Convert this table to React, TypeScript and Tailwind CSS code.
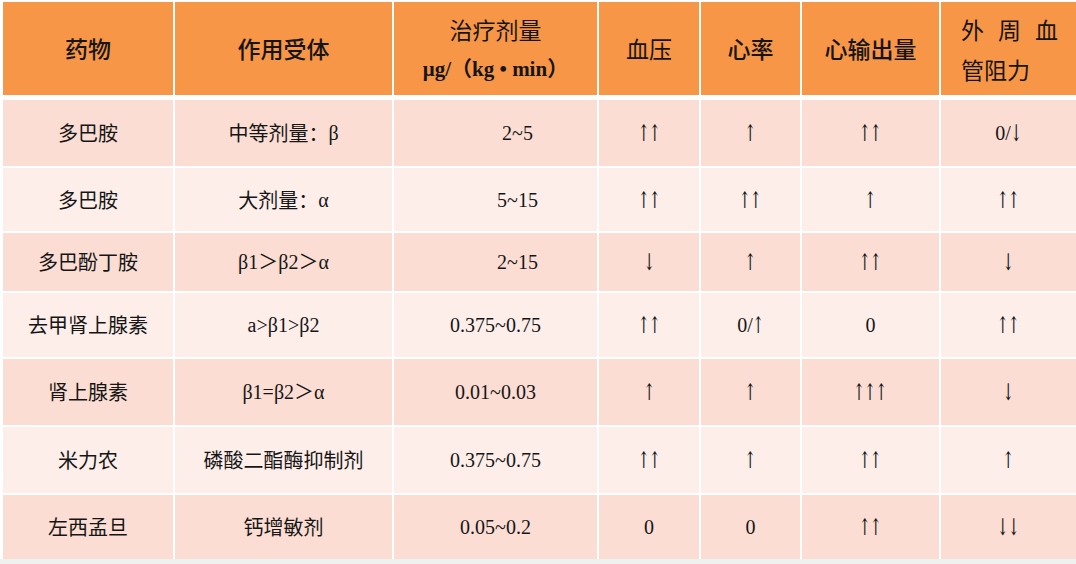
import React from "react";

const cjk = "font-['Noto_Sans_CJK_SC','Noto_Sans',sans-serif]";
const serif = "font-['Liberation_Serif','Noto_Sans_CJK_SC',serif]";

type Row = {
  drug: string;
  receptor: React.ReactNode;
  dose: string;
  shift?: boolean;
  bp: string;
  hr: string;
  co: string;
  svr: string;
};

const rows: Row[] = [
  { drug: "多巴胺", receptor: <>中等剂量：<span className={serif}>β</span></>, dose: "2~5", shift: true, bp: "↑↑", hr: "↑", co: "↑↑", svr: "0/↓" },
  { drug: "多巴胺", receptor: <>大剂量：<span className={serif}>α</span></>, dose: "5~15", shift: true, bp: "↑↑", hr: "↑↑", co: "↑", svr: "↑↑" },
  { drug: "多巴酚丁胺", receptor: <span className={serif}>β1＞β2＞α</span>, dose: "2~15", shift: true, bp: "↓", hr: "↑", co: "↑↑", svr: "↓" },
  { drug: "去甲肾上腺素", receptor: <span className={serif}>a&gt;β1&gt;β2</span>, dose: "0.375~0.75", bp: "↑↑", hr: "0/↑", co: "0", svr: "↑↑" },
  { drug: "肾上腺素", receptor: <span className={serif}>β1=β2＞α</span>, dose: "0.01~0.03", bp: "↑", hr: "↑", co: "↑↑↑", svr: "↓" },
  { drug: "米力农", receptor: "磷酸二酯酶抑制剂", dose: "0.375~0.75", bp: "↑↑", hr: "↑", co: "↑↑", svr: "↑" },
  { drug: "左西孟旦", receptor: "钙增敏剂", dose: "0.05~0.2", bp: "0", hr: "0", co: "↑↑", svr: "↓↓" },
];

const heights = ["h-[66px]", "h-[63px]", "h-[58px]", "h-[64px]", "h-[66px]", "h-[66px]", "h-[64px]"];

// arrows are set in DejaVu Serif, squeezed to the narrow look of the original
function Effect({ v }: { v: string }) {
  const parts = v.split(/([↑↓]+)/).filter(Boolean);
  return (
    <span className="flex items-center">
      {parts.map((p, i) =>
        /[↑↓]/.test(p) ? (
          <span
            key={i}
            className="font-['DejaVu_Serif',serif] text-[20px] font-extralight inline-block scale-x-[0.7] scale-y-[1.15] tracking-[-1px] ml-[-3px] mr-[-2px]"
          >
            {p}
          </span>
        ) : (
          <span key={i} className={serif}>{p}</span>
        )
      )}
    </span>
  );
}

export default function App() {
  return (
    <div className="w-[1076px] h-[564px] bg-[#eef2ee] overflow-hidden">
      <div className="pl-[3px] pt-[2px] bg-white">
        <div className="grid grid-cols-[170px_217px_203px_100px_99px_137px_135px] gap-x-[2px] text-[#151515]">
          {/* header */}
          <div className={`h-[93px] bg-[#f79646] flex items-center justify-center text-[23px] font-medium ${cjk}`}>药物</div>
          <div className={`h-[93px] bg-[#f79646] flex items-center justify-center text-[23px] font-medium ${cjk}`}>作用受体</div>
          <div className="h-[93px] bg-[#f79646] flex flex-col items-center justify-center leading-[40px]">
            <span className={`text-[23px] ${cjk}`}>治疗剂量</span>
            <span className={`text-[21px] font-bold ${serif}`}>μg/（kg • min）</span>
          </div>
          <div className={`h-[93px] bg-[#f79646] flex items-center justify-center text-[23px] ${cjk}`}>血压</div>
          <div className={`h-[93px] bg-[#f79646] flex items-center justify-center text-[23px] font-medium ${cjk}`}>心率</div>
          <div className={`h-[93px] bg-[#f79646] flex items-center justify-center text-[23px] font-medium ${cjk}`}>心输出量</div>
          <div className={`h-[93px] bg-[#f79646] flex flex-col justify-center pl-[20px] text-[23px] leading-[40px] ${cjk}`}>
            <span className="tracking-[14px]">外周血</span>
            <span>管阻力</span>
          </div>
        </div>
        <div className="h-[5px] bg-white" />
        <div className="flex flex-col gap-y-[2px] bg-white">
          {rows.map((r, i) => {
            const bg = i % 2 === 0 ? "bg-[#fbddd3]" : "bg-[#fdeeea]";
            const h = heights[i];
            const cell = `${h} ${bg} flex items-center justify-center`;
            return (
              <div key={i} className="grid grid-cols-[170px_217px_203px_100px_99px_137px_135px] gap-x-[2px] text-[#151515]">
                <div className={`${cell} text-[20px] ${cjk}`}>{r.drug}</div>
                <div className={`${cell} text-[20px] ${cjk}`}>{r.receptor}</div>
                <div className={`${cell} text-[20px] ${serif}`}>
                  <span className={r.shift ? "ml-[44px]" : ""}>{r.dose}</span>
                </div>
                <div className={`${cell} text-[20px]`}><Effect v={r.bp} /></div>
                <div className={`${cell} text-[20px]`}><Effect v={r.hr} /></div>
                <div className={`${cell} text-[20px]`}><Effect v={r.co} /></div>
                <div className={`${cell} text-[20px]`}><Effect v={r.svr} /></div>
              </div>
            );
          })}
        </div>
      </div>
    </div>
  );
}
